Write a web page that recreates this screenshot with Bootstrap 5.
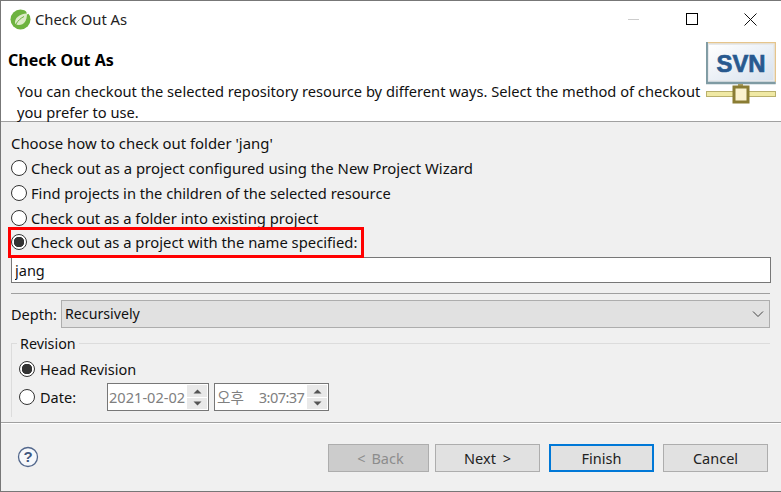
<!DOCTYPE html>
<html lang="en">
<head>
<meta charset="utf-8">
<title>Check Out As</title>
<link rel="stylesheet" href="https://cdn.jsdelivr.net/npm/bootstrap@5.3.0/dist/css/bootstrap.min.css">
<style>
html,body{height:492px;overflow:hidden;background:#f0f0f0}
body{font-family:"Noto Sans","Noto Sans CJK KR",sans-serif;font-size:14.5px;line-height:20px;color:#111}
.dlg{position:relative;height:492px;border:solid #777;border-width:1px 0 1px 1px;background:#f0f0f0}
.tbar{height:36px;background:#fff;padding-left:9px}
.tbar-title{margin-left:4px;color:#222;font-size:14.8px}
.winbtn{width:58.5px;height:36px}
.winbar{margin-right:1px}
.hdr{height:85px;background:#fff;border-bottom:1px solid #a0a0a0;padding:13px 5px 0 7px}
.hdr-title{font-weight:700;font-size:16px;line-height:20px;color:#000}
.hdr-desc{margin:11px 0 0 9px;width:692px;line-height:21px;color:#111;font-size:14.67px}
.hdr-text{flex:1;min-width:0}
.svn{margin-top:-8px;flex:none}
.content{padding:11px 10px 0 10px}
.opt{height:24.67px;margin:0;padding:0;min-height:0;gap:4px;font-size:14.8px}
.opt-wide{font-size:14.88px}
.opt-tight{font-size:14.67px}
.form-check-input.rad{width:16px;height:16px;margin:0;float:none;flex:none;background-color:#fff;border:1.5px solid #333;background-image:none;box-shadow:none;position:relative}
.form-check-input.rad:checked{background-color:#fff;border-color:#333;background-image:radial-gradient(circle,#333 0,#333 5px,transparent 5.5px)}
.ask{height:20px;margin-bottom:2px;font-size:14.9px}
.radios{padding-top:1px}
.name-in.form-control{height:26px;border:1px solid #777;border-radius:0;padding:1px 3px 0;font-size:14.5px;line-height:22px;color:#111;box-shadow:none;margin-top:2px;width:760px;font-family:inherit}
.rule{border-top:1px solid #a0a0a0;margin-top:10px;width:759px}
.depth{margin-top:6px;height:28px;width:759px}
.depth-lab{width:50px;flex:none;padding-top:1px}
.depth-sel{flex:1;height:28px;border:1px solid #adadad;background:#e1e1e1;padding:1px 0 0 3px;font-size:14.2px}
.revbox{position:relative;margin-top:15px;height:74px;border:solid #dcdcdc;border-width:1px 0 0 1px;width:759px;padding:11px 0 0 7px}
.revbox-legend{position:absolute;top:-10px;left:5px;background:#f0f0f0;padding:0 3px;line-height:20px;font-size:14.3px}
.revrow{height:28.5px;gap:5px}
.revrow-lab{width:62px;flex:none}
.spin{height:28px;border:1px solid #777;background:#fff;color:#808080;font-size:14.6px;padding-left:1px}
.spin-date{width:102px}
.spin-time{width:115px;padding-left:2px}
.time-clock{margin-left:15px;letter-spacing:-.6px}
.spin-btns{width:20px;height:24px;margin-left:auto;margin-right:1px;gap:1px;flex:none}
.spin-b{flex:1;background:#e9e9e9;display:flex;align-items:center;justify-content:center}
.foot-rule{border-top:1px solid #a0a0a0;border-bottom:1px solid #fff;margin-top:5px}
.foot{padding:20px 13px 0 16px}
.foot-help{margin-top:-2px}
.foot-gap{flex:1}
.btn.wbtn{height:28px;width:105px;border:1px solid #adadad;border-radius:0;background:#e1e1e1;color:#222;font-size:14.5px;line-height:20px;padding:0;box-shadow:none}
.btn.wbtn-back{width:101px;margin-right:6px;color:#8c8c8c;background:#ccc;opacity:1;word-spacing:2px;padding-left:4px}
.btn.wbtn-next{margin-right:9px;word-spacing:3px}
.btn.wbtn-def{border:2px solid #0078d7;margin-right:9px}
.redmark{position:absolute;left:7px;top:226px;width:356px;height:31px;border:3px solid #f00;pointer-events:none}
</style>
</head>
<body>
<div class="dlg">
  <div class="tbar d-flex align-items-center">
    <svg width="21" height="21" viewBox="0 0 21 21"><circle cx="10.5" cy="10.5" r="10" fill="#6db33f"/><path d="M5 14.5C4.5 9 9 5 17 4.5c0 7-3 11.5-8 11.5-1.500 0-3-.6-4-1.500z" fill="#dcebc8"/><path d="M6 15c2-3.500 5-6 8-7.500" stroke="#6db33f" fill="none"/><path d="M16 1.500l3 3-2 1z" fill="#fff"/></svg>
    <span class="tbar-title">Check Out As</span>
    <div class="ms-auto d-flex winbar">
      <div class="winbtn d-flex align-items-center justify-content-center"><svg width="13" height="13"><path d="M1 6.500h11" stroke="#ccc"/></svg></div>
      <div class="winbtn d-flex align-items-center justify-content-center"><svg width="13" height="13"><rect x=".5" y=".5" width="11" height="11" fill="none" stroke="#000"/></svg></div>
      <div class="winbtn d-flex align-items-center justify-content-center"><svg width="13" height="13"><path d="M.5.500l12 12M12.500.500l-12 12" stroke="#111" fill="none"/></svg></div>
    </div>
  </div>
  <div class="hdr d-flex">
    <div class="hdr-text">
      <div class="hdr-title">Check Out As</div>
      <div class="hdr-desc">You can checkout the selected repository resource by different ways. Select the method of checkout you prefer to use.</div>
    </div>
    <svg class="svn" width="70" height="62" viewBox="0 0 70 62">
      <defs><linearGradient id="g" x1="0" y1="0" x2="1" y2="1"><stop offset="0" stop-color="#fff"/><stop offset="1" stop-color="#d8e2ee"/></linearGradient></defs>
      <rect x="0" y="0" width="70" height="42" fill="#e6e9ec"/>
      <path d="M0 .500h69.500V40" fill="none" stroke="#e6c58c" stroke-width="1.500"/>
      <path d="M.700 0V41h69" fill="none" stroke="#7f9ba3" stroke-width="2.500"/>
      <rect x="3" y="3" width="64" height="35" fill="url(#g)"/>
      <text x="35" y="30" text-anchor="middle" font-family="Liberation Sans" font-weight="700" font-size="24" fill="#28598f" stroke="#28598f" stroke-width=".7" textLength="49" lengthAdjust="spacingAndGlyphs">SVN</text>
      <rect x="32" y="42" width="5" height="5" fill="#a89b5c"/>
      <rect x=".5" y="49.500" width="69" height="5" fill="#f0e9a4" stroke="#b9b06c"/>
      <rect x="28" y="45" width="14" height="15" fill="#fbf2cf" stroke="#8a7c33" stroke-width="3"/>
    </svg>
  </div>
  <div class="content">
    <div class="ask">Choose how to check out folder 'jang'</div>
    <div class="radios">
      <label class="opt opt-wide d-flex align-items-center"><input class="form-check-input rad" type="radio" name="how"><span>Check out as a project configured using the New Project Wizard</span></label>
      <label class="opt opt-tight d-flex align-items-center"><input class="form-check-input rad" type="radio" name="how"><span>Find projects in the children of the selected resource</span></label>
      <label class="opt d-flex align-items-center"><input class="form-check-input rad" type="radio" name="how"><span>Check out as a folder into existing project</span></label>
      <label class="opt d-flex align-items-center"><input class="form-check-input rad" type="radio" name="how" checked><span>Check out as a project with the name specified:</span></label>
    </div>
    <input class="form-control name-in" type="text" value="jang">
    <div class="rule"></div>
    <div class="depth d-flex align-items-center">
      <span class="depth-lab">Depth:</span>
      <div class="depth-sel d-flex align-items-center">Recursively<svg class="ms-auto me-1" width="14" height="9"><path d="M2 1.500l5 5 5-5" stroke="#444" fill="none"/></svg></div>
    </div>
    <div class="revbox">
      <span class="revbox-legend">Revision</span>
      <div class="revrow d-flex align-items-center"><input class="form-check-input rad" type="radio" name="rev" checked><span>Head Revision</span></div>
      <div class="revrow d-flex align-items-center"><input class="form-check-input rad" type="radio" name="rev"><span class="revrow-lab">Date:</span>
        <div class="spin spin-date d-flex align-items-center"><span>2021-02-02</span><div class="spin-btns d-flex flex-column"><div class="spin-b"><svg width="9" height="5"><path d="M4.500 .5l4 4h-8z" fill="#555"/></svg></div><div class="spin-b"><svg width="9" height="5"><path d="M4.500 4.500l4-4h-8z" fill="#555"/></svg></div></div></div>
        <div class="spin spin-time d-flex align-items-center"><span>오후</span><span class="time-clock">3:07:37</span><div class="spin-btns d-flex flex-column"><div class="spin-b"><svg width="9" height="5"><path d="M4.500 .5l4 4h-8z" fill="#555"/></svg></div><div class="spin-b"><svg width="9" height="5"><path d="M4.500 4.500l4-4h-8z" fill="#555"/></svg></div></div></div>
      </div>
    </div>
  </div>
  <div class="foot-rule"></div>
  <div class="foot d-flex align-items-center">
    <svg class="foot-help" width="22" height="22" viewBox="0 0 22 22"><circle cx="11" cy="11" r="9.500" fill="#f6f8fb" stroke="#52678c" stroke-width="1.300"/><text x="11" y="16" text-anchor="middle" font-family="Liberation Sans" font-weight="700" font-size="15" fill="#41577f">?</text></svg>
    <div class="foot-gap"></div>
    <button class="btn wbtn wbtn-back" type="button" disabled>&lt; Back</button>
    <button class="btn wbtn wbtn-next" type="button">Next &gt;</button>
    <button class="btn wbtn wbtn-def" type="button">Finish</button>
    <button class="btn wbtn" type="button">Cancel</button>
  </div>
  <div class="redmark"></div>
</div>
<script src="https://cdn.jsdelivr.net/npm/bootstrap@5.3.0/dist/js/bootstrap.bundle.min.js"></script>
</body>
</html>
